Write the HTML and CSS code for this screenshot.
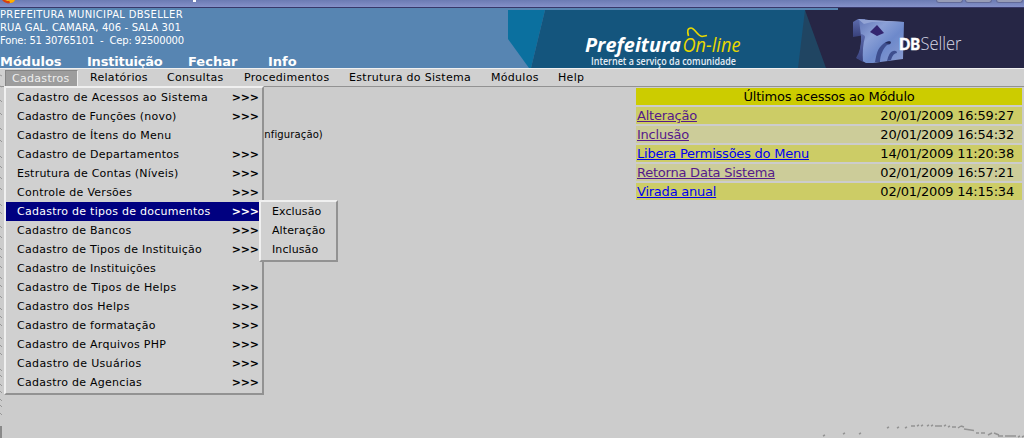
FILE: index.html
```html
<!DOCTYPE html>
<html lang="pt-BR">
<head>
<meta charset="utf-8">
<title>Prefeitura On-line</title>
<link rel="stylesheet" href="styles.css">
</head>
<body>
<div class="titlebar">
  <svg class="app-icon" width="16" height="4" viewBox="0 0 16 4"><path d="M2 0h13q-2 3-7 3.500Q4 3 2 0" fill="#d94010"/><path d="M9 0h6q-1 3-5 3z" fill="#ffb000"/><path d="M5 0h5l-2 1z" fill="#f6d020"/></svg>
  <i class="title-mark"></i>
  <div class="window-buttons"><i></i><i></i><i></i></div>
</div>
<header class="header">
  <div class="identity">
    <div class="address">
      <div class="a1">PREFEITURA MUNICIPAL DBSELLER</div>
      <div class="a2">RUA GAL. CAMARA, 406 - SALA 301</div>
      <div class="a3">Fone: 51 30765101 &nbsp;-&nbsp; Cep: 92500000</div>
    </div>
    <nav class="topnav"><a class="n1">Módulos</a><a class="n2">Instituição</a><a class="n3">Fechar</a><a>Info</a></nav>
  </div>
  <svg class="banner" width="516" height="60" viewBox="0 0 516 60">
    <defs>
      <linearGradient id="cube" x1="0" y1="0" x2="1" y2="1"><stop offset="0" stop-color="#5f72b4"/><stop offset=".35" stop-color="#8ba0d6"/><stop offset=".6" stop-color="#6d89cb"/><stop offset="1" stop-color="#8b9cd0"/></linearGradient>
      <linearGradient id="side" x1="0" y1="0" x2="0" y2="1"><stop offset="0" stop-color="#5d6cae"/><stop offset="1" stop-color="#38407a"/></linearGradient>
    </defs>
    <path d="M0 2H37L23 60H21L0 31Z" fill="#0b709f"/>
    <path d="M37 2H300V60H23Z" fill="#14557d"/>
    <path d="M297 2L290 60H330Z" fill="#204562"/>
    <path d="M297 2H330V0H516V60H318Z" fill="#262645"/>
    <text class="brand" x="77" y="44" textLength="96" lengthAdjust="spacingAndGlyphs">Prefeitura</text>
    <text class="online" x="174.500" y="44" textLength="58" lengthAdjust="spacingAndGlyphs">On-line</text>
    <path d="M180.500 28c-1.500-5-1-8 2.500-8 4 0 6 8 11 8.500l5-1" fill="none" stroke="#e9d900" stroke-width="1.600"/>
    <text class="tagline" x="83" y="57" textLength="145" lengthAdjust="spacingAndGlyphs">Internet a serviço da comunidade</text>
    <path d="M345 14l5-3 7 0v16l-12 2z" fill="url(#side)"/>
    <path d="M351 11l9 1 36 2-1 37-30 4-7 0-9-5q5-8 4-22l-1-8z" fill="url(#cube)"/>
    <path d="M353 26q4 1 4 3-3 10-2 25l-7-4q6-9 5-24z" fill="url(#side)"/>
    <path d="M350 11l11 1 35 2-32 0-8 2z" fill="#93a4d5"/>
    <path d="M369 17l7 8-7 3-7-4z" fill="#33256f"/>
    <path d="M367 54c2-11 3-15 11-20q5-2 5 1-1 2-4 2c-4 4-7 10-7 17zM379 53q2-9 6-10 4-1 4 2-4 0-6 7z" fill="#3e4e8e"/>
    <path d="M377 35q4-3 6-1l-1 2z" fill="#242b58"/>
    <text class="db" x="391" y="42" textLength="21" lengthAdjust="spacingAndGlyphs">DB</text>
    <text class="seller" x="412.500" y="42" textLength="41" lengthAdjust="spacingAndGlyphs">Seller</text>
  </svg>
</header>
<nav class="menubar">
  <a class="open">Cadastros</a><a class="m2">Relatórios</a><a class="m3">Consultas</a><a class="m4">Procedimentos</a><a class="m5">Estrutura do Sistema</a><a class="m6">Módulos</a><a>Help</a>
</nav>
<main class="content">
  <p class="module-note">(Configuração)</p>
  <table class="recent">
    <thead><tr><th colspan="2">Últimos acessos ao Módulo</th></tr></thead>
    <tbody>
      <tr><td><a class="visited">Alteração</a></td><td>20/01/2009 16:59:27</td></tr>
      <tr class="alt"><td><a class="visited">Inclusão</a></td><td>20/01/2009 16:54:32</td></tr>
      <tr><td><a>Libera Permissões do Menu</a></td><td>14/01/2009 11:20:38</td></tr>
      <tr class="alt"><td><a class="visited">Retorna Data Sistema</a></td><td>02/01/2009 16:57:21</td></tr>
      <tr><td><a>Virada anual</a></td><td>02/01/2009 14:15:34</td></tr>
    </tbody>
  </table>
</main>
<svg class="left-edge" width="3" height="370" viewBox="0 0 3 370">
  <path d="M0 7l2 1M0 18l2 1M0 32l2 2M0 45l2 2M0 60l2 2M0 72l2 2M0 88l2 2M0 98l2 2M0 109l2 2M0 120l2 2M0 136l2 2M0 144l2 2M0 158l2 2M0 168l2 2M0 180l2 2M0 188l2 2M0 198l2 2M0 209l2 2M0 217l2 2M0 228l2 2M0 240l2 2M0 248l2 2M0 256l2 2M0 269l2 2M0 277l2 2M0 285l2 2M0 301l2 2M0 307l2 2M0 316l2 2M0 323l2 2M0 331l2 2M0 337l2 2M0 345l2 2" stroke="#999" fill="none"/>
  <path d="M0 358h2v12H0z" fill="#898989"/>
</svg>
<svg class="bottom-curve" width="224" height="28" viewBox="0 0 224 28">
  <path d="M23 26l2-1M43 24l2-1M59 24l2-1M87 18l2-1M97 18l2-1M105 18l2-1M111 16h4M117 16l2-1M121 16l2-1M127 16l2-1M131 16l2-1M135 16h7M144 16l2-1M148 17l2-1M152 17h4M158 18l3-2M161 16l3 1M164 19l10 1.500M176 23h3M181 23h4M188 25l4-2M194 23l5 2M198 26h5M205 26h11M218 27l2-1M222 27l2-1" stroke="#939393" stroke-width="1.500" fill="none"/>
</svg>
<ul class="dropdown">
  <li class="wide"><span>Cadastro de Acessos ao Sistema</span><b>&gt;&gt;&gt;</b></li>
  <li class="tight"><span>Cadastro de Funções (novo)</span><b>&gt;&gt;&gt;</b></li>
  <li><span>Cadastro de Ítens do Menu</span></li>
  <li><span>Cadastro de Departamentos</span><b>&gt;&gt;&gt;</b></li>
  <li class="tight"><span>Estrutura de Contas (Níveis)</span><b>&gt;&gt;&gt;</b></li>
  <li><span>Controle de Versões</span><b>&gt;&gt;&gt;</b></li>
  <li class="selected"><span>Cadastro de tipos de documentos</span><b>&gt;&gt;&gt;</b></li>
  <li><span>Cadastro de Bancos</span><b>&gt;&gt;&gt;</b></li>
  <li><span>Cadastro de Tipos de Instituição</span><b>&gt;&gt;&gt;</b></li>
  <li><span>Cadastro de Instituições</span></li>
  <li class="even"><span>Cadastro de Tipos de Helps</span><b>&gt;&gt;&gt;</b></li>
  <li class="even"><span>Cadastro dos Helps</span><b>&gt;&gt;&gt;</b></li>
  <li><span>Cadastro de formatação</span><b>&gt;&gt;&gt;</b></li>
  <li><span>Cadastro de Arquivos PHP</span><b>&gt;&gt;&gt;</b></li>
  <li class="even"><span>Cadastro de Usuários</span><b>&gt;&gt;&gt;</b></li>
  <li><span>Cadastro de Agencias</span><b>&gt;&gt;&gt;</b></li>
</ul>
<ul class="submenu"><li>Exclusão</li><li>Alteração</li><li>Inclusão</li></ul>
</body>
</html>
```
FILE: styles.css
```css
* { box-sizing: border-box; }
body {
  margin: 0; width: 1024px; height: 438px; overflow: hidden; position: relative;
  display: flex; flex-direction: column;
  background: #ccc; color: #000;
  font: 11px/19px "DejaVu Sans", sans-serif;
  white-space: nowrap;
}
ul { margin: 0; padding: 0; list-style: none; }

.titlebar { flex: none; height: 8px; display: flex; background: linear-gradient(#6b7bb3, #8591c9); border-bottom: 1px solid #373869; }
.title-mark { width: 3px; height: 2px; margin-left: 177px; background: #fff; }
.window-buttons { margin-left: auto; display: flex; gap: 2px; padding-right: 1px; }
.window-buttons i { width: 27px; height: 3px; background: #979cb6; border: 1px solid #626a99; border-top: 0; border-radius: 0 0 3px 3px; }
.window-buttons i:last-child { margin-left: 2px; }

.header { flex: none; height: 60px; display: flex; background: #5785b2; }
.identity { width: 508px; color: #fff; }
.address { height: 47px; font-size: 10px; line-height: 13px; }
.a1 { letter-spacing: .34px; }
.a2 { letter-spacing: .12px; }
.a3 { letter-spacing: -.19px; }
.topnav { display: flex; font-weight: bold; font-size: 13px; line-height: 14px; }
.n1 { width: 87px; }
.n2 { width: 101px; letter-spacing: -.22px; }
.n3 { width: 80px; }
.banner { flex: none; display: block; }
.brand { font: italic bold 20px "Open Sans", sans-serif; fill: #fff; }
.online { font: italic 20px "Open Sans", sans-serif; fill: #e9d900; }
.tagline { font: 600 10px "Open Sans", sans-serif; fill: #e5edf5; }
.db { font: 900 17px Lato, sans-serif; fill: #fff; stroke: #fff; stroke-width: .5px; }
.seller { font: 300 19px "Open Sans", sans-serif; fill: #d8d8e5; }

.menubar { flex: none; height: 19px; display: flex; padding-left: 5px; background: #d0d0d0; border-top: 1px solid #f0f0f0; border-bottom: 1px solid #929292; line-height: 17px; letter-spacing: .3px; }
.open { width: 73px; margin: 1px 12px 0 0; padding-left: 6px; color: #eee; background: #9d9d9d; border: solid #858585; border-width: 1px 0 0 1px; border-right: 1px solid #eee; line-height: 16px; }
.m2 { width: 77px; }
.m3 { width: 77px; }
.m4 { width: 105px; }
.m5 { width: 142px; }
.m6 { width: 67px; }

.content { flex: 1; display: flex; justify-content: space-between; align-items: flex-start; }
.module-note { margin: 40px 0 0 247px; font-size: 10px; line-height: 15px; letter-spacing: .12px; }
.recent { width: 386px; margin: 1px 2px 0 0; border-spacing: 0; font-size: 13px; line-height: 17px; }
.recent th, .recent td { height: 19px; padding: 0; border-bottom: 2px solid transparent; background-clip: padding-box; }
.recent th { background-color: #cc0; font-weight: normal; letter-spacing: -.2px; }
.recent td { padding-left: 1px; background-color: #cccc66; letter-spacing: -.23px; }
.recent td:last-child { padding-right: 8px; text-align: right; letter-spacing: -.2px; }
.recent .alt td { background-color: #cccc99; }
.recent a { color: #00e; text-decoration: underline; }
.recent .visited { color: #551a8b; }

.dropdown, .submenu { position: absolute; background: #d0d0d0; border: 2px solid; border-color: #f0f0f0 #929292 #929292 #f0f0f0; letter-spacing: .26px; }
.dropdown { left: 4px; top: 86px; width: 260px; height: 309px; }
.dropdown li { height: 19px; display: flex; padding: 0 3px 0 11px; justify-content: space-between; }
.dropdown b { letter-spacing: -.1px; }
.dropdown .wide { letter-spacing: .41px; }
.dropdown .even { letter-spacing: .35px; }
.dropdown .tight { letter-spacing: .22px; }
.selected { background: navy; color: #fff; }
.submenu { left: 259px; top: 200px; width: 79px; height: 62px; padding-left: 11px; letter-spacing: .1px; }
.left-edge { position: absolute; left: 0; top: 68px; }
.bottom-curve { position: absolute; left: 800px; top: 410px; }
```
